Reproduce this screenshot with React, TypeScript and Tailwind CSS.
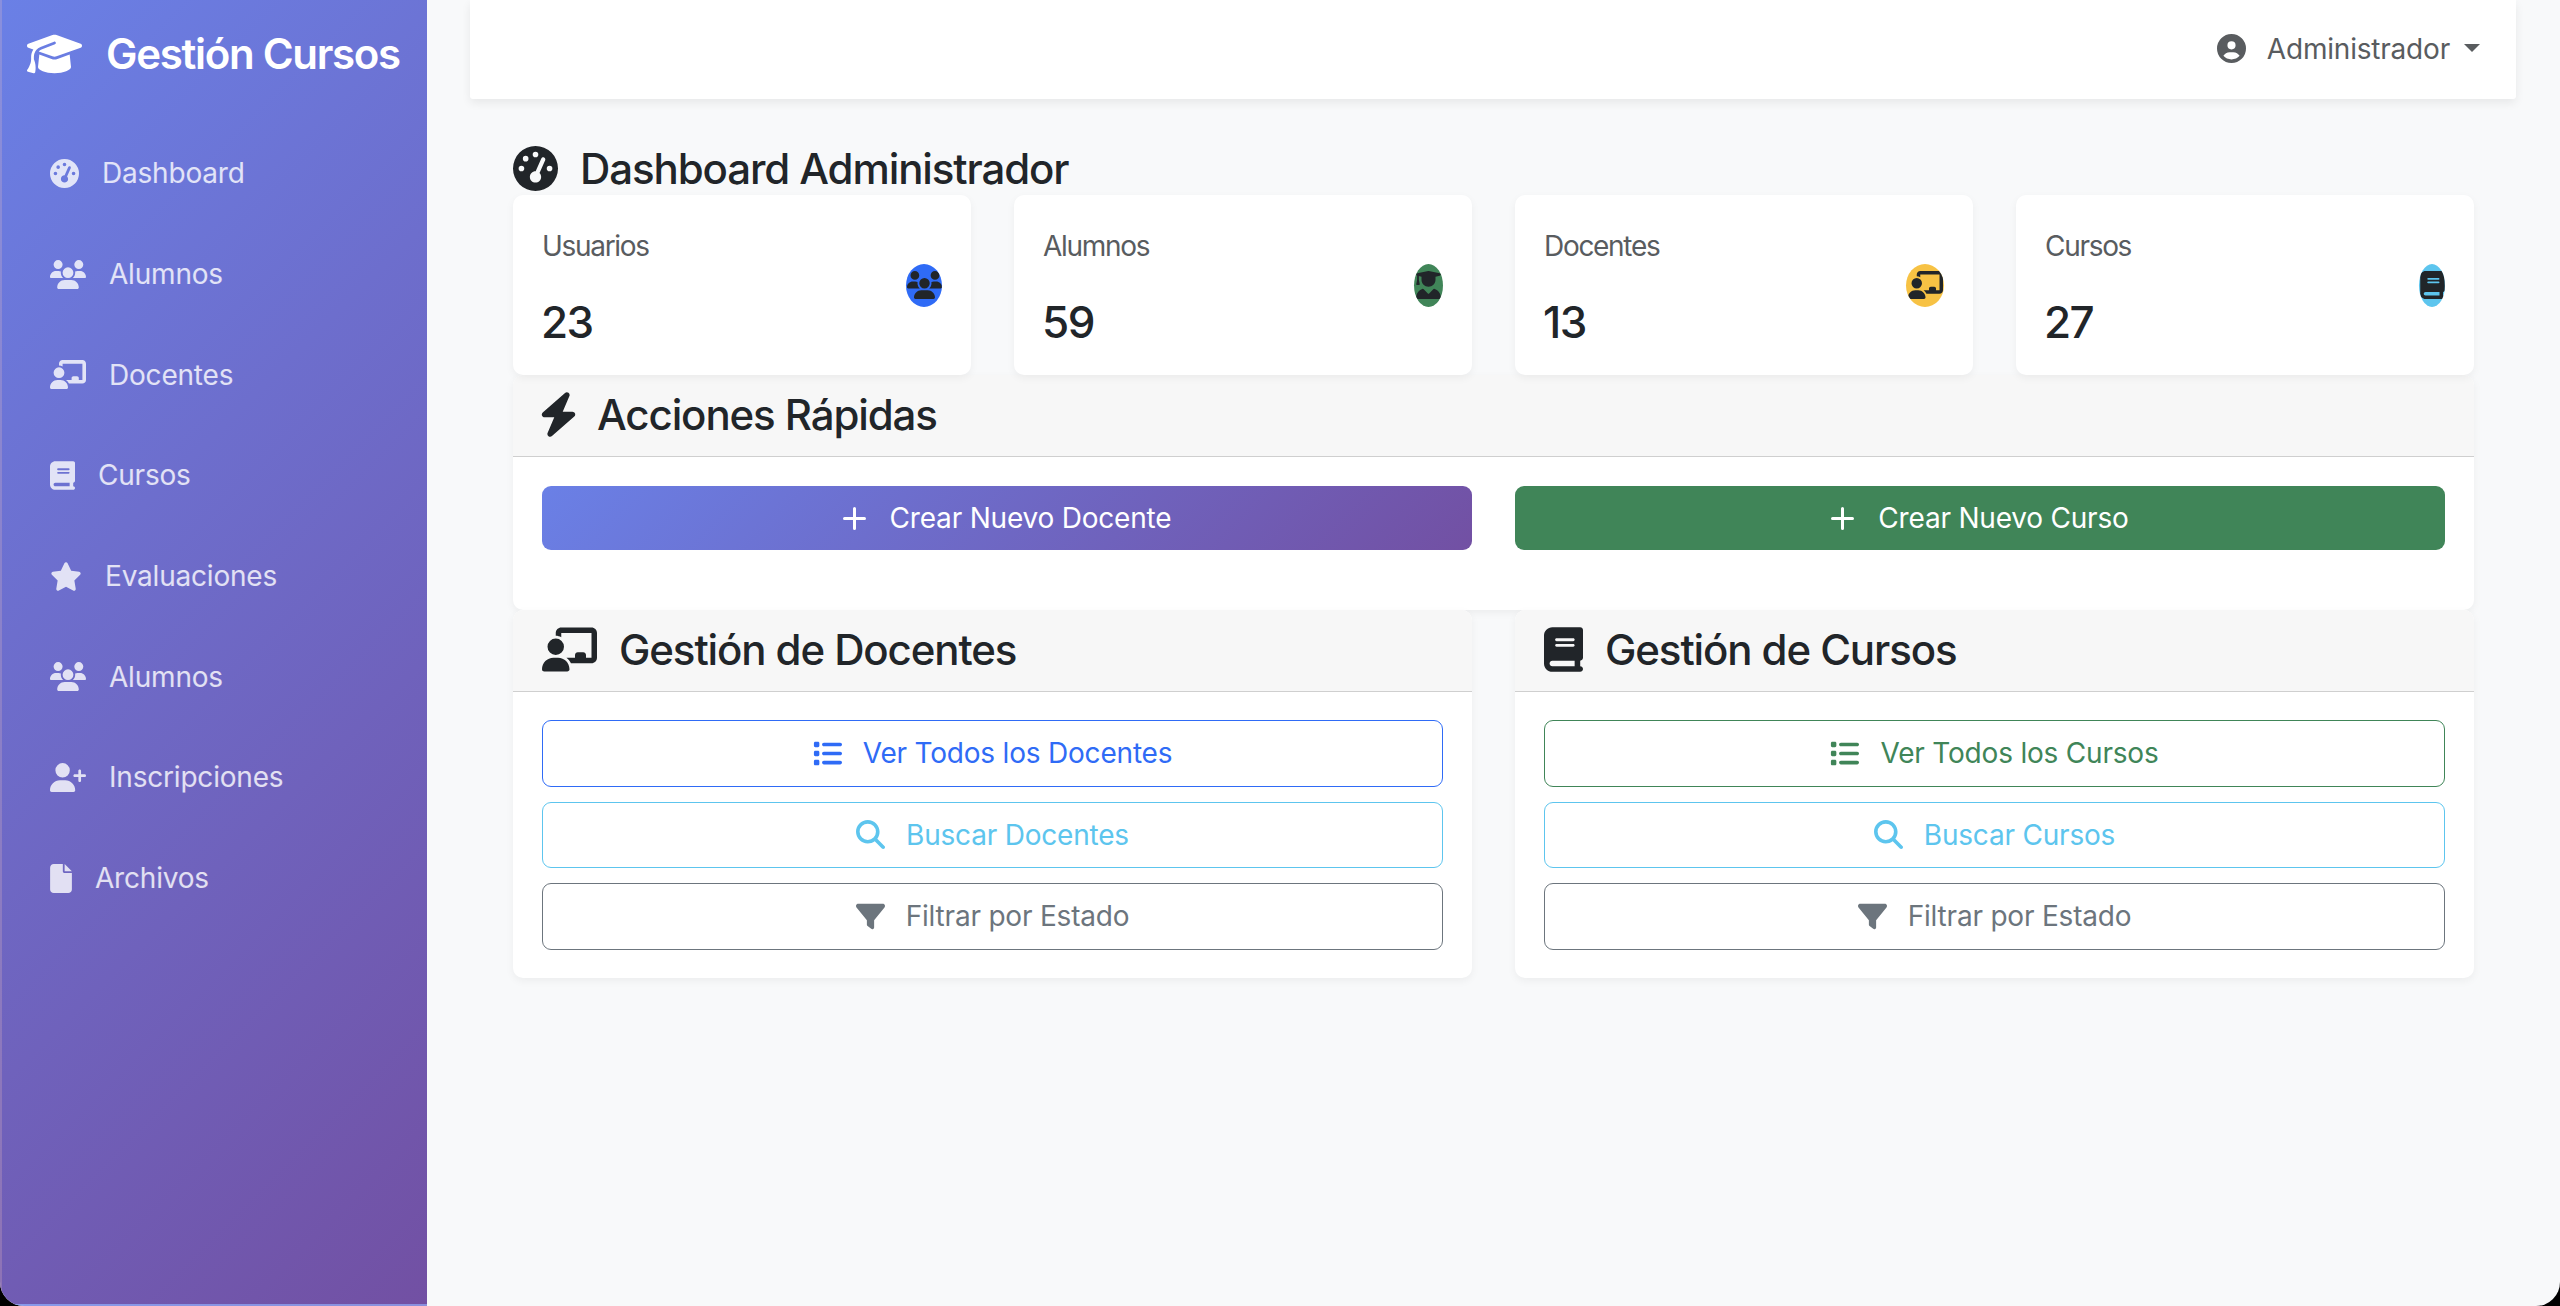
import type { ComponentType, ReactNode } from 'react';
import {
  FaBolt,
  FaBook,
  FaChalkboardUser,
  FaCircleUser,
  FaFile,
  FaFilter,
  FaGaugeHigh,
  FaGraduationCap,
  FaList,
  FaMagnifyingGlass,
  FaStar,
  FaUserGraduate,
  FaUserPlus,
  FaUsers,
} from 'react-icons/fa6';

type Icon = ComponentType<{ className?: string }>;

const navItems: { label: string; icon: Icon; size: string }[] = [
  { label: 'Dashboard', icon: FaGaugeHigh, size: 'w-[29px]' },
  { label: 'Alumnos', icon: FaUsers, size: 'w-[36px]' },
  { label: 'Docentes', icon: FaChalkboardUser, size: 'w-[36px]' },
  { label: 'Cursos', icon: FaBook, size: 'w-[25px]' },
  { label: 'Evaluaciones', icon: FaStar, size: 'w-[32px]' },
  { label: 'Alumnos', icon: FaUsers, size: 'w-[36px]' },
  { label: 'Inscripciones', icon: FaUserPlus, size: 'w-[36px]' },
  { label: 'Archivos', icon: FaFile, size: 'w-[22px]' },
];

const stats = [
  { label: 'Usuarios', value: '23', icon: FaUsers, size: 'w-[35px]', badge: 'w-[36px] bg-[#2f6bf6]' },
  { label: 'Alumnos', value: '59', icon: FaUserGraduate, size: 'w-[25px]', badge: 'w-[29px] bg-[#408558]' },
  { label: 'Docentes', value: '13', icon: FaChalkboardUser, size: 'w-[35px]', badge: 'w-[38px] bg-[#f7c244]' },
  { label: 'Cursos', value: '27', icon: FaBook, size: 'w-[25px]', badge: 'w-[26px] bg-[#5dc5ee]' },
];

function PlusIcon() {
  return (
    <svg viewBox="0 0 23 23" className="h-[23px] w-[23px]" stroke="currentColor" strokeWidth="3" strokeLinecap="round">
      <path d="M11.5 1.5v20M1.5 11.5h20" />
    </svg>
  );
}

function Panel({ icon: Icon, title, children, iconSize, className = '', iconBox = '' }: { icon: Icon; title: string; children: ReactNode; iconSize: string; className?: string; iconBox?: string }) {
  return (
    <section className={`overflow-hidden rounded-[10px] bg-white shadow-[0_3px_8px_rgba(0,0,0,0.05)] ${className}`}>
      <div className="flex h-[82px] items-center gap-[23px] border-b border-[#cfcfcf] bg-[#f7f7f7] px-[29px] pb-[2px]">
        <span className={`flex shrink-0 justify-center ${iconBox}`}>
          <Icon className={`h-[45px] shrink-0 text-[#212529] ${iconSize}`} />
        </span>
        <h2 className="-ml-[1px] text-[42px] leading-none font-medium tracking-[-1.1px] text-[#212529]">{title}</h2>
      </div>
      {children}
    </section>
  );
}

function OutlineButton({ icon: Icon, label, color }: { icon: Icon; label: string; color: string }) {
  return (
    <button className={`flex h-[66.5px] w-full items-center justify-center gap-[21px] rounded-[9px] border bg-white text-[28px] tracking-[-0.2px] ${color}`}>
      <Icon className="h-[29px] w-[29px]" />
      {label}
    </button>
  );
}

export default function App() {
  return (
    <div className="bg-black">
      <div className="flex h-[1306px] overflow-hidden rounded-b-[24px] bg-[#f8f9fa] font-['Inter',sans-serif]">
        {/* sidebar */}
        <aside className="h-[1306px] w-[427px] shrink-0 border-b-2 border-l-2 border-white/20 bg-[linear-gradient(135deg,#6a80e6,#7250a3)]">
          <div className="flex h-[108px] items-center gap-[24px] pl-[25px] pb-[1px]">
            <FaGraduationCap className="h-[44px] w-[55px] text-white" />
            <span className="text-[42px] font-semibold tracking-[-1.3px] text-white">Gestión Cursos</span>
          </div>
          <nav className="mt-[15px] flex flex-col pl-[48px]">
            {navItems.map((item, i) => (
              <a key={i} className="flex h-[100.7px] items-center gap-[23px] text-[28px] tracking-[-0.2px] text-white/80">
                <item.icon className={`h-[29px] shrink-0 ${item.size}`} />
                {item.label}
              </a>
            ))}
          </nav>
        </aside>

        <div className="min-w-0 flex-1 pr-[44px] pl-[43px]">
          {/* top bar */}
          <header className="flex h-[99px] items-center justify-end rounded-b-[3px] bg-white pr-[36px] pb-[2px] shadow-[0_4px_10px_rgba(0,0,0,0.07)]">
            <FaCircleUser className="h-[29px] w-[29px] text-[#595c5f]" />
            <span className="ml-[21px] text-[28px] tracking-[-0.2px] text-[#595c5f]">Administrador</span>
            <span className="mb-[2px] ml-[14px] h-0 w-0 border-x-[8px] border-t-[8px] border-x-transparent border-t-[#595c5f]" />
          </header>

          <main className="pl-[43px] pr-[42px]">
            <h1 className="mt-[47px] mb-[5px] flex h-[44px] items-center gap-[22px] text-[42px] font-medium tracking-[-1.1px] text-[#212529]">
              <FaGaugeHigh className="h-[45px] w-[45px] shrink-0" />
              Dashboard Administrador
            </h1>

            <div className="grid grid-cols-4 gap-[43px]">
              {stats.map((s) => (
                <div key={s.label} className="flex h-[180px] items-center justify-between rounded-[10px] bg-white px-[29px] shadow-[0_3px_8px_rgba(0,0,0,0.05)]">
                  <div className="pt-[4px]">
                    <div className="pb-[31px] text-[28px] leading-[38px] tracking-[-1.3px] text-[#595c5f]">{s.label}</div>
                    <div className="-ml-[1px] text-[44px] leading-[52px] font-medium tracking-[-1.5px] text-[#212529]">{s.value}</div>
                  </div>
                  <div className={`flex h-[43px] items-center justify-center overflow-hidden rounded-[50%] ${s.badge}`}>
                    <s.icon className={`h-[28px] shrink-0 text-[#212529] ${s.size}`} />
                  </div>
                </div>
              ))}
            </div>

            <Panel icon={FaBolt} iconSize="w-[39px]" title="Acciones Rápidas" className="h-[235px]" iconBox="w-[33px]">
              <div className="grid grid-cols-2 gap-[43px] px-[29px] pt-[29px]">
                <button className="flex h-[64px] items-center justify-center gap-[24px] rounded-[9px] bg-[linear-gradient(135deg,#6a80e6,#7250a3)] text-[28px] tracking-[-0.2px] text-white">
                  <PlusIcon />
                  Crear Nuevo Docente
                </button>
                <button className="flex h-[64px] items-center justify-center gap-[24px] rounded-[9px] bg-[#408558] text-[28px] tracking-[-0.2px] text-white">
                  <PlusIcon />
                  Crear Nuevo Curso
                </button>
              </div>
            </Panel>

            <div className="grid grid-cols-2 gap-[43px]">
              <Panel icon={FaChalkboardUser} iconSize="w-[55px]" title="Gestión de Docentes">
                <div className="flex flex-col gap-[15px] px-[29px] pt-[28px] pb-[28px]">
                  <OutlineButton icon={FaList} label="Ver Todos los Docentes" color="border-[#2f6bf6] text-[#2f6bf6]" />
                  <OutlineButton icon={FaMagnifyingGlass} label="Buscar Docentes" color="border-[#5dc5ee] text-[#5dc5ee]" />
                  <OutlineButton icon={FaFilter} label="Filtrar por Estado" color="border-[#6c757d] text-[#6c757d]" />
                </div>
              </Panel>
              <Panel icon={FaBook} iconSize="w-[39px]" title="Gestión de Cursos">
                <div className="flex flex-col gap-[15px] px-[29px] pt-[28px] pb-[28px]">
                  <OutlineButton icon={FaList} label="Ver Todos los Cursos" color="border-[#408558] text-[#408558]" />
                  <OutlineButton icon={FaMagnifyingGlass} label="Buscar Cursos" color="border-[#5dc5ee] text-[#5dc5ee]" />
                  <OutlineButton icon={FaFilter} label="Filtrar por Estado" color="border-[#6c757d] text-[#6c757d]" />
                </div>
              </Panel>
            </div>
          </main>
        </div>
      </div>
    </div>
  );
}
